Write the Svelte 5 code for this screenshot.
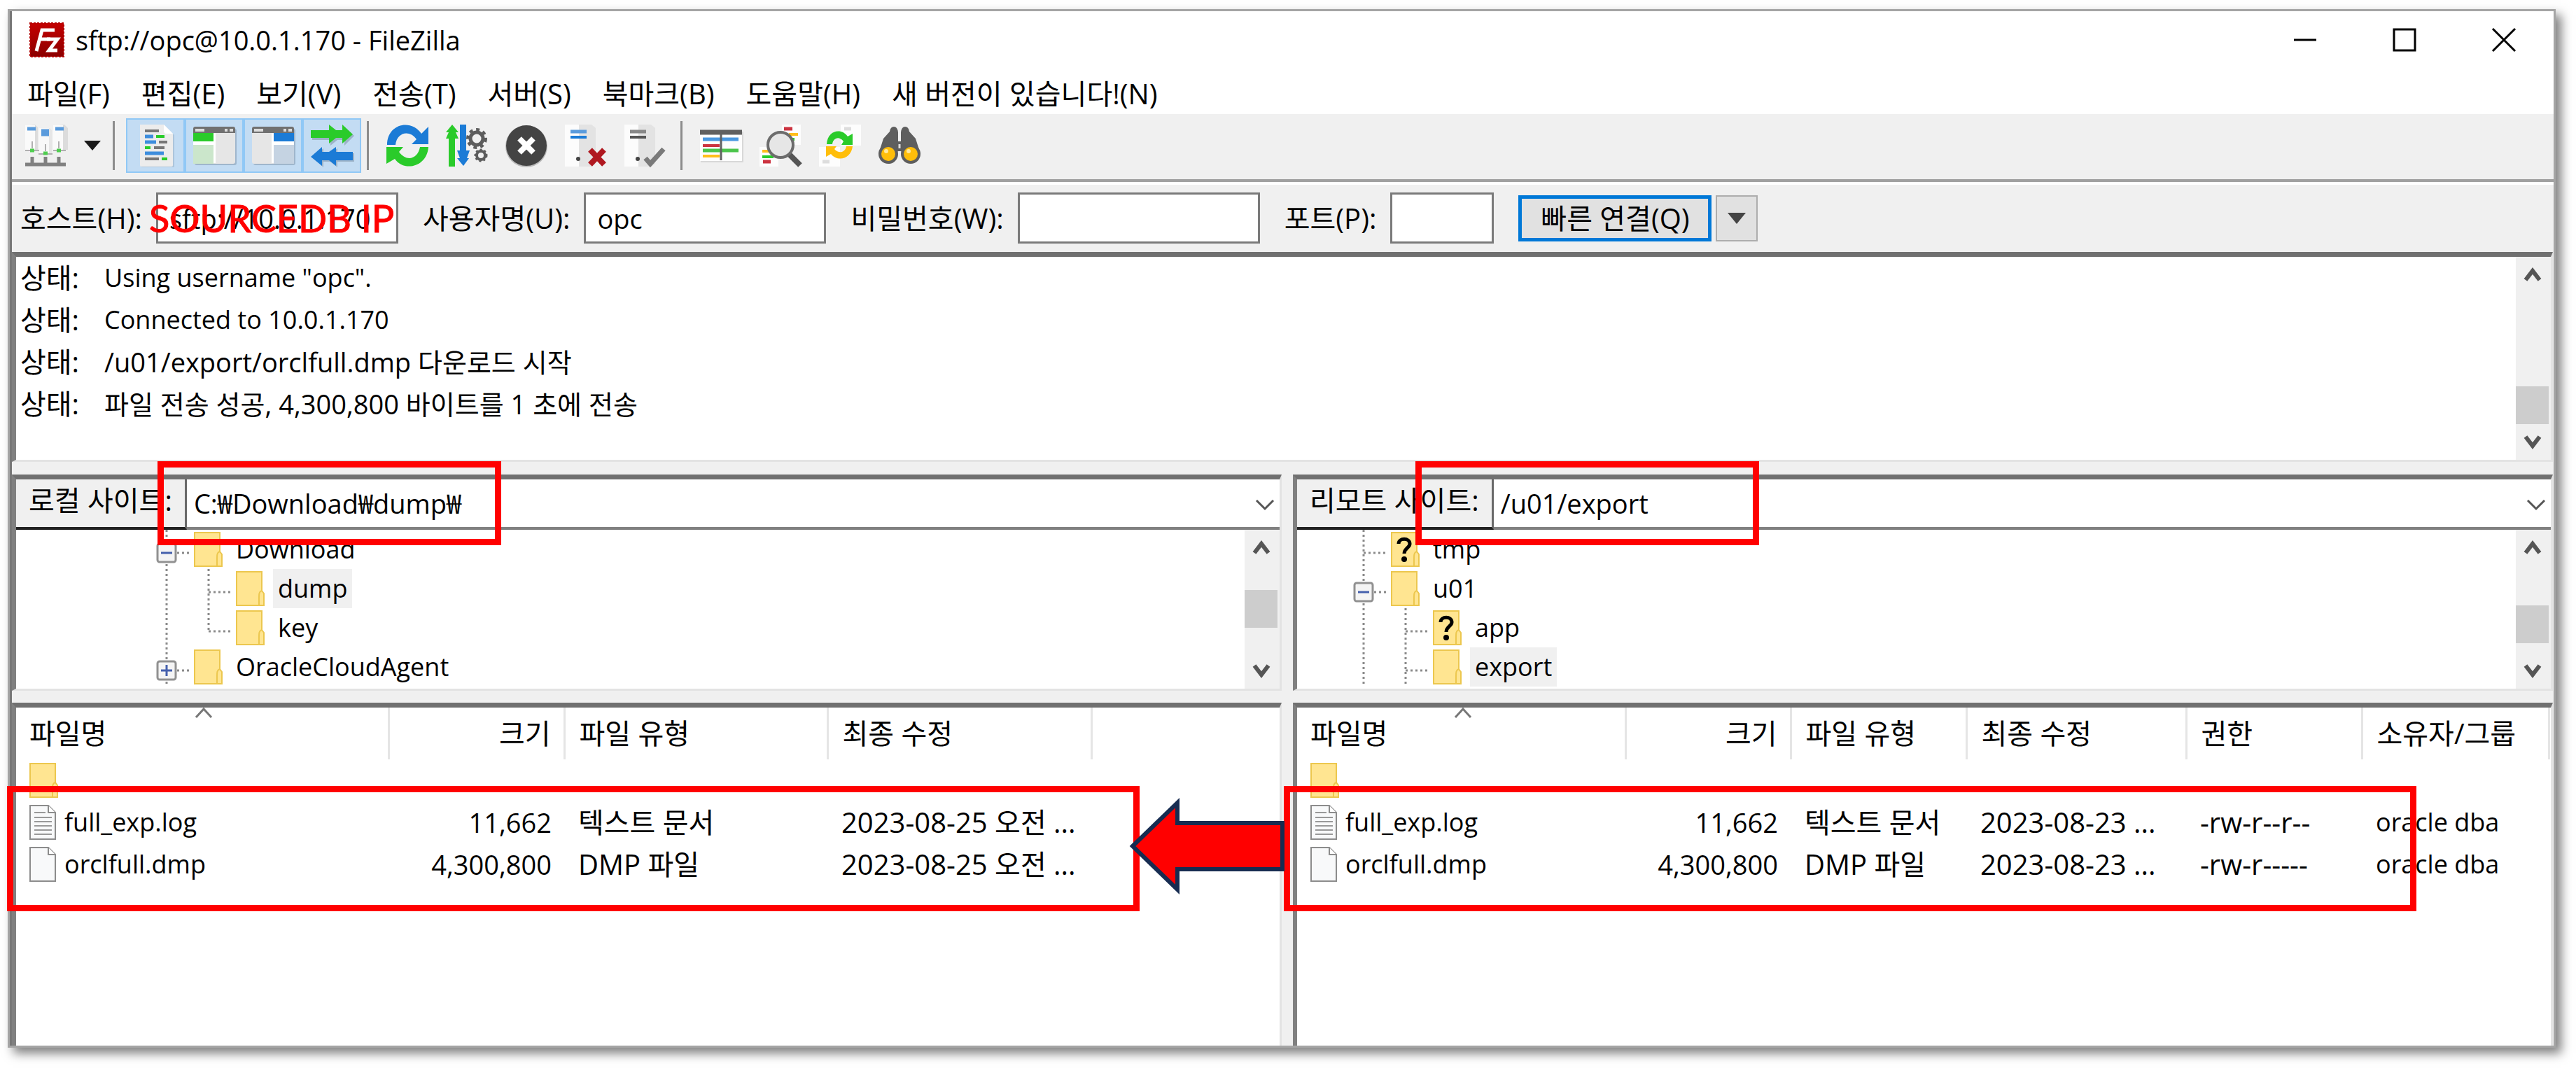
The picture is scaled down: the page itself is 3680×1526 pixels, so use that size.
<script>
  const menus = ['파일(F)', '편집(E)', '보기(V)', '전송(T)', '서버(S)', '북마크(B)', '도움말(H)', '새 버전이 있습니다!(N)'];

  const log = [
    { text: 'Using username "opc".', size: 'small' },
    { text: 'Connected to 10.0.1.170', size: 'small' },
    { text: '/u01/export/orclfull.dmp 다운로드 시작', size: 'medium' },
    { text: '파일 전송 성공, 4,300,800 바이트를 1 초에 전송', size: 'medium' }
  ];

  const localTree = [
    { name: 'Download', guides: ['minus'] },
    { name: 'dump', guides: ['line', 'tee'], selected: true },
    { name: 'key', guides: ['line', 'end'] },
    { name: 'OracleCloudAgent', guides: ['plus'] }
  ];

  const remoteTree = [
    { name: 'tmp', guides: ['tee'], unknown: true },
    { name: 'u01', guides: ['minus'] },
    { name: 'app', guides: ['line', 'tee'], unknown: true },
    { name: 'export', guides: ['line', 'tee'], selected: true }
  ];

  const localFiles = {
    columns: [
      { label: '파일명', key: 'name', width: 532 },
      { label: '크기', key: 'size', width: 251 },
      { label: '파일 유형', key: 'type', width: 376 },
      { label: '최종 수정', key: 'date', width: 377 }
    ],
    rows: [
      { icon: 'text', name: 'full_exp.log', size: '11,662', type: '텍스트 문서', date: '2023-08-25 오전 ...' },
      { icon: 'blank', name: 'orclfull.dmp', size: '4,300,800', type: 'DMP 파일', date: '2023-08-25 오전 ...' }
    ]
  };

  const remoteFiles = {
    columns: [
      { label: '파일명', key: 'name', width: 469 },
      { label: '크기', key: 'size', width: 236 },
      { label: '파일 유형', key: 'type', width: 251 },
      { label: '최종 수정', key: 'date', width: 314 },
      { label: '권한', key: 'perm', width: 251 },
      { label: '소유자/그룹', key: 'owner', width: 267 }
    ],
    rows: [
      { icon: 'text', name: 'full_exp.log', size: '11,662', type: '텍스트 문서', date: '2023-08-23 ...', perm: '-rw-r--r--', owner: 'oracle dba' },
      { icon: 'blank', name: 'orclfull.dmp', size: '4,300,800', type: 'DMP 파일', date: '2023-08-23 ...', perm: '-rw-r-----', owner: 'oracle dba' }
    ]
  };
</script>

{#snippet folder(unknown)}
  <svg class="folder" viewBox="0 0 41 50" aria-hidden="true">
    <path d="M1 1H37V28L40 32V49H1Z" fill="#ffe591" stroke="#ecc74e" stroke-width="2" />
    <path d="M37 28C33 29 33 33 33 38V48" fill="none" stroke="#ecc74e" stroke-width="2" />
    {#if unknown}
      <path d="M11 17C11 8 27 8 27 17C27 23 19 23 19 31" fill="none" stroke="#000" stroke-width="5" />
      <circle cx="19" cy="39" r="4" />
    {/if}
  </svg>
{/snippet}

{#snippet fileIcon(kind)}
  <svg class="folder" viewBox="0 0 41 50" aria-hidden="true">
    <path d="M1 1H27L37 11V49H1Z" fill="#f8f9fa" stroke="#8c8c8c" stroke-width="2" />
    <path d="M27 1V11H37" fill="#fff" stroke="#8c8c8c" stroke-width="2" />
    {#if kind === 'text'}
      <path d="M7 11H23M7 18H32M7 24H32M7 30H32M7 36H32M7 42H32" stroke="#999" stroke-width="2" />
    {/if}
  </svg>
{/snippet}

{#snippet guide(kind)}
  <svg class="guide" viewBox="0 0 60 56" aria-hidden="true">
    {#if kind === 'end'}
      <path class="dots" d="M30 0V33" />
    {:else}
      <path class="dots" d="M30 0V56" />
    {/if}
    {#if kind === 'tee' || kind === 'end'}
      <path class="dots" d="M30 33H65" />
    {/if}
    {#if kind === 'plus' || kind === 'minus'}
      <path class="dots" d="M45 33H64" />
      <rect x="17" y="20" width="26" height="26" rx="3" fill="#f4f4f4" stroke="#919191" stroke-width="3" />
      <path d={kind === 'plus' ? 'M22 33H38M30 25V41' : 'M22 33H38'} stroke="#4560ad" stroke-width="3" />
    {/if}
  </svg>
{/snippet}

{#snippet scrollbar(before, after)}
  <div class="scrollbar">
    <button class="arrow" aria-label="위로 스크롤">
      <svg viewBox="0 0 24 22"><path d="M2 19L12 6L22 19" fill="none" stroke="#555" stroke-width="6" /></svg>
    </button>
    <div style:flex-grow={before}></div>
    <div class="thumb"></div>
    <div style:flex-grow={after}></div>
    <button class="arrow" aria-label="아래로 스크롤">
      <svg viewBox="0 0 24 22"><path d="M2 3L12 16L22 3" fill="none" stroke="#555" stroke-width="6" /></svg>
    </button>
  </div>
{/snippet}

{#snippet sitePane(side, label, path, tree, before, after)}
  <section class="panel site {side}">
    <div class="site-bar">
      <label for="{side}-path">{label}</label>
      <div class="combo">
        <select id="{side}-path"><option>{path}</option></select>
        <svg viewBox="0 0 28 18" aria-hidden="true"><path d="M2 2L14 14L26 2" fill="none" stroke="#555" stroke-width="3" /></svg>
      </div>
    </div>
    <div class="tree-area">
      <ul class="tree">
        {#each tree as node}
          <li>
            {#each node.guides as kind}{@render guide(kind)}{/each}
            {@render folder(node.unknown)}
            <span class:selected={node.selected}>{node.name}</span>
          </li>
        {/each}
      </ul>
      {@render scrollbar(before, after)}
    </div>
    <div class="mark path-mark"></div>
  </section>
{/snippet}

{#snippet fileList(side, data)}
  <section class="panel list {side}">
    <table>
      <colgroup>
        {#each data.columns as col}<col style:width="{col.width}px" />{/each}
        <col />
      </colgroup>
      <thead>
        <tr>
          {#each data.columns as col, i}
            <th class={col.key} scope="col">
              {col.label}
              {#if i === 0}
                <svg class="sort" viewBox="0 0 26 16" aria-hidden="true"><path d="M2 14L13 2L24 14" fill="none" stroke="#777" stroke-width="3" /></svg>
              {/if}
            </th>
          {/each}
          <td></td>
        </tr>
      </thead>
      <tbody>
        <tr><td class="name"><div class="file">{@render folder(false)}</div></td></tr>
        {#each data.rows as row}
          <tr>
            {#each data.columns as col}
              <td class={col.key}>
                {#if col.key === 'name'}
                  <div class="file">{@render fileIcon(row.icon)}{row.name}</div>
                {:else}
                  {row[col.key]}
                {/if}
              </td>
            {/each}
          </tr>
        {/each}
      </tbody>
    </table>
    <div class="mark files-mark"></div>
    {#if side === 'local'}
      <svg class="transfer" viewBox="0 0 222 142" aria-hidden="true">
        <path d="M5 71L69 9V38H219V104H69V133Z" fill="#f00" stroke="#172c51" stroke-width="6" />
      </svg>
    {/if}
  </section>
{/snippet}

<main class="window">
  <header class="title-bar">
    <svg class="logo" viewBox="0 0 50 50" aria-hidden="true">
      <defs>
        <linearGradient id="fz" x1="0" y1="0" x2="0" y2="1"><stop offset="0" stop-color="#c40000" /><stop offset="1" stop-color="#8b0000" /></linearGradient>
      </defs>
      <rect x="1" y="1" width="48" height="48" fill="url(#fz)" stroke="#b40000" stroke-width="2" stroke-dasharray="3 2" />
      <path d="M10 41L18 11H36M15 24H30" fill="none" stroke="#fff" stroke-width="5" />
      <path d="M25 24H40L28 40H40" fill="none" stroke="#fff" stroke-width="5" />
    </svg>
    <h1>sftp://opc@10.0.1.170 - FileZilla</h1>
    <div class="window-buttons">
      <button aria-label="최소화"><svg viewBox="0 0 36 36"><path d="M2 18H34" stroke="#000" stroke-width="3" /></svg></button>
      <button aria-label="최대화"><svg viewBox="0 0 36 36"><rect x="3" y="3" width="30" height="30" fill="none" stroke="#000" stroke-width="3" /></svg></button>
      <button aria-label="닫기"><svg viewBox="0 0 36 36"><path d="M2 2L34 34M34 2L2 34" stroke="#000" stroke-width="3" /></svg></button>
    </div>
  </header>

  <nav class="menu-bar">
    {#each menus as item}<button>{item}</button>{/each}
  </nav>

  <div class="toolbar">
    <button class="sites" aria-label="사이트 관리자">
      <svg viewBox="0 0 60 60">
        <path d="M0 2L14 0L18 4V36H0Z M40 2L56 0L61 5V36H40Z" fill="#dcdcdc" />
        <path d="M0 1H14V36H0Z M40 1H54V36H40Z" fill="#fafafa" />
        <path d="M20 5H35L38 8V41H20Z" fill="#e6e6e6" /><path d="M20 5H34V41H20Z" fill="#f8f8f8" />
        <path d="M3 6H15M43 6H55M23 9H34M23 14H34" stroke="#5a9bdc" stroke-width="5" />
        <path d="M10 24V34M29 28V38M48 24V34M0 37H20M19 42H39M40 37H58" stroke="#b0b0b0" stroke-width="2" />
        <path d="M7 37H13M26 41H32M45 37H51" stroke="#4fce4f" stroke-width="5" />
        <path d="M0 57H58M10 46V56M29 46V56M48 46V56" stroke="#808080" stroke-width="5" />
      </svg>
    </button>
    <button class="sites-menu" aria-label="사이트 목록">
      <svg viewBox="0 0 24 14"><path d="M0 0H24L12 14Z" fill="#1a1a1a" /></svg>
    </button>
    <i class="sep"></i>
    <div class="toggles">
      <button aria-label="메시지 로그" aria-pressed="true">
        <svg viewBox="0 0 60 60">
          <path d="M10 3H44L57 15V61H10Z" fill="#9fb6cc" opacity=".6" />
          <path d="M8 0H42L55 13V58Q55 60 53 60H10Q8 60 8 58Z" fill="#ececec" />
          <path d="M42 0L55 13H46Q42 13 42 9Z" fill="#fff" />
          <path d="M15 9H35M35 25H47M28 33H43M15 49H35" stroke="#777" stroke-width="4" />
          <path d="M15 17H27M15 25H31M15 41H42" stroke="#3d8ddd" stroke-width="5" />
          <path d="M31 17H43M15 33H23M39 49H47" stroke="#29cc29" stroke-width="4" />
        </svg>
      </button>
      <button aria-label="로컬 디렉터리 트리" aria-pressed="true">
        <svg viewBox="0 0 60 60">
          <rect x="2" y="6" width="60" height="52" rx="3" fill="#9fb6cc" />
          <rect y="3" width="60" height="53" rx="3" fill="#e6e6e6" />
          <path d="M0 12V6Q0 3 3 3H57Q60 3 60 6V12Z" fill="#707070" />
          <path d="M3 8H16M45 8H49M52 8H57" stroke="#ddd" stroke-width="4" />
          <rect y="12" width="29" height="12" fill="#2acb2a" />
          <rect y="24" width="29" height="5" fill="#fff" /><rect x="29" y="12" width="3" height="43" fill="#fff" />
          <rect y="29" width="29" height="27" fill="#cbe6cb" />
        </svg>
      </button>
      <button aria-label="원격 디렉터리 트리" aria-pressed="true">
        <svg viewBox="0 0 60 60">
          <rect x="2" y="6" width="60" height="52" rx="3" fill="#9fb6cc" />
          <rect y="3" width="60" height="53" rx="3" fill="#e6e6e6" />
          <path d="M0 12V6Q0 3 3 3H57Q60 3 60 6V12Z" fill="#707070" />
          <path d="M3 8H16M45 8H49M52 8H57" stroke="#ddd" stroke-width="4" />
          <rect x="31" y="12" width="29" height="12" fill="#1b7bd6" />
          <rect x="31" y="24" width="29" height="5" fill="#fff" /><rect x="28" y="12" width="3" height="43" fill="#fff" />
          <rect x="31" y="29" width="29" height="27" fill="#c5d3e2" />
        </svg>
      </button>
      <button aria-label="전송 대기열" aria-pressed="true">
        <svg viewBox="0 0 60 60">
          <path d="M2 11H28V3L38 11H48V3L62 16L48 30V22H38L28 30V22H2Z M62 41H38V34L28 41H18V34L3 47L18 61V53H28L38 61V53H62Z" fill="#9db3c8" />
          <path d="M0 8H26V0L36 8H45V0L60 14L45 27V19H36L26 27V19H0Z" fill="#2acb2a" />
          <path d="M60 39H36V32L26 39H16V32L0 46L16 59V51H26L36 59V51H60Z" fill="#1b7bd6" />
        </svg>
      </button>
    </div>
    <i class="sep"></i>
    <div class="tools">
      <button aria-label="새로 고침">
        <svg viewBox="0 0 60 60">
          <path d="M1 29C1 -1 35 -9 50 13L60 3V28H36L43 21C33 7 15 11 13 29Z" fill="#1b7bd6" />
          <path d="M60 32C58 61 25 68 12 49L0 56V32H24L18 39C29 54 45 49 48 32Z" fill="#2acb2a" />
        </svg>
      </button>
      <button aria-label="대기열 처리">
        <svg viewBox="0 0 60 60">
          <path d="M9 0L18 11H14L18 20H13V60H4V20H0L4 11H0Z" fill="#2acb2a" />
          <path d="M20 0H29V37H34L30 48H33L25 59L16 48H20L16 37H20Z" fill="#1b7bd6" />
          <circle cx="44" cy="20" r="9" fill="none" stroke="#5c5c5c" stroke-width="5" />
          <circle cx="44" cy="20" r="13" fill="none" stroke="#5c5c5c" stroke-width="4" stroke-dasharray="5 5" />
          <circle cx="50" cy="44" r="6" fill="none" stroke="#5c5c5c" stroke-width="4" />
          <circle cx="50" cy="44" r="8" fill="none" stroke="#5c5c5c" stroke-width="3" stroke-dasharray="3 3" />
        </svg>
      </button>
      <button aria-label="취소">
        <svg viewBox="0 0 60 60">
          <circle cx="30" cy="31" r="30" fill="#bbb" /><circle cx="30" cy="30" r="29" fill="#444" />
          <path d="M20 20L40 40M40 20L20 40" stroke="#fff" stroke-width="8" />
        </svg>
      </button>
      <button aria-label="연결 끊기">
        <svg viewBox="0 0 60 60">
          <path d="M18 0H38L44 5V56L38 60H18Z" fill="#e3e3e3" /><rect y="0" width="20" height="60" fill="#fcfcfc" />
          <path d="M8 10H31" stroke="#5a9bdc" stroke-width="5" /><path d="M8 18H31" stroke="#1b7bd6" stroke-width="4" />
          <circle cx="19" cy="49" r="3" fill="#444" />
          <path d="M36 36L56 57M56 36L36 57" stroke="#b01820" stroke-width="8" />
        </svg>
      </button>
      <button aria-label="다시 연결">
        <svg viewBox="0 0 60 60">
          <path d="M18 0H38L44 5V56L38 60H18Z" fill="#e3e3e3" /><rect y="0" width="20" height="60" fill="#fcfcfc" />
          <path d="M8 10H31" stroke="#888" stroke-width="5" /><path d="M8 18H31" stroke="#555" stroke-width="4" />
          <circle cx="19" cy="49" r="3" fill="#444" />
          <path d="M30 48L37 56L56 35" fill="none" stroke="#7a7a7a" stroke-width="7" />
        </svg>
      </button>
    </div>
    <i class="sep"></i>
    <div class="tools">
      <button aria-label="디렉터리 비교">
        <svg viewBox="0 0 60 60">
          <rect x="1" y="10" width="61" height="44" fill="#d8d8d8" /><rect x="0" y="10" width="60" height="42" fill="#fdfdfd" />
          <path d="M0 11H60" stroke="#606060" stroke-width="7" />
          <path d="M4 21H55" stroke="#4a98e0" stroke-width="5" /><path d="M4 30H28" stroke="#cc3340" stroke-width="4" />
          <path d="M4 37H55" stroke="#4bc44b" stroke-width="5" /><path d="M4 45H28" stroke="#ffbe1a" stroke-width="4" />
          <path d="M30 12V51" stroke="#606060" stroke-width="3" />
        </svg>
      </button>
      <button aria-label="파일 필터">
        <svg viewBox="0 0 60 60">
          <rect x="32" y="0" width="27" height="29" fill="#fdfdfd" /><rect y="32" width="27" height="28" fill="#fdfdfd" />
          <path d="M35 6H47M5 53H16" stroke="#cc3340" stroke-width="5" />
          <path d="M42 14H55M4 38H14" stroke="#ffbe1a" stroke-width="4" />
          <path d="M44 21H50M4 46H20" stroke="#2acb2a" stroke-width="4" />
          <path d="M43 43L58 58" stroke="#555" stroke-width="8" />
          <circle cx="30" cy="29" r="18" fill="#e6e6e6" stroke="#6c6c6c" stroke-width="4" />
        </svg>
      </button>
      <button aria-label="동기화 탐색">
        <svg viewBox="0 0 60 60">
          <rect x="31" y="0" width="29" height="30" fill="#fdfdfd" /><rect y="32" width="30" height="28" fill="#fdfdfd" />
          <path d="M36 6H46M5 53H15" stroke="#ddd" stroke-width="5" />
          <path d="M11 28C12 8 32 4 41 17L48 13V29H32L35 24C28 15 20 20 19 28Z" fill="#2acb2a" />
          <path d="M48 31C46 49 27 54 17 42L10 46V31H25L22 35C29 43 38 39 39 31Z" fill="#ffbe0a" />
        </svg>
      </button>
      <button aria-label="파일 검색">
        <svg viewBox="0 0 60 60">
          <path d="M16 10Q17 3 22 3Q27 3 28 11V24H32V11Q33 3 38 3Q43 3 44 10L53 20L60 42L31 38H29L0 42L7 20Z" fill="#5e5e5e" />
          <path d="M30 28V34" stroke="#ddd" stroke-width="3" />
          <circle cx="14" cy="42" r="12" fill="#ffbe0a" stroke="#5e5e5e" stroke-width="4" />
          <circle cx="46" cy="42" r="12" fill="#ffbe0a" stroke="#5e5e5e" stroke-width="4" />
          <circle cx="11" cy="38" r="3" fill="#ffe9a0" /><circle cx="43" cy="38" r="3" fill="#ffe9a0" />
        </svg>
      </button>
    </div>
  </div>

  <form class="quick-connect" onsubmit={(event) => event.preventDefault()}>
    <label for="host">호스트(H):</label>
    <div class="host">
      <input id="host" value="sftp://10.0.1.170" />
      <span class="note">SOURCEDB IP</span>
    </div>
    <label for="user">사용자명(U):</label>
    <input id="user" value="opc" />
    <label for="pass">비밀번호(W):</label>
    <input id="pass" type="password" />
    <label for="port">포트(P):</label>
    <input id="port" class="port" />
    <button class="connect">빠른 연결(Q)</button>
    <button class="history" type="button" aria-label="최근 연결">
      <svg viewBox="0 0 26 16"><path d="M0 0H26L13 16Z" fill="#444" /></svg>
    </button>
  </form>

  <section class="panel log">
    <ul>
      {#each log as line}<li><b>상태:</b><span class={line.size}>{line.text}</span></li>{/each}
    </ul>
    {@render scrollbar(135, 1)}
  </section>

  <div class="panes">
    {@render sitePane('local', '로컬 사이트:', 'C:₩Download₩dump₩', localTree, 36, 37)}
    {@render sitePane('remote', '리모트 사이트:', '/u01/export', remoteTree, 58, 15)}
    {@render fileList('local', localFiles)}
    {@render fileList('remote', remoteFiles)}
  </div>
</main>

<style>
  :global(body) {
    margin: 0;
    background: #fff;
  }

  .window {
    --red: 9px solid #f00;
    box-sizing: border-box;
    display: flex;
    flex-direction: column;
    min-height: calc(100vh - 42px);
    margin: 13px 29px 29px 11px;
    border: 3px solid #a5a5a5;
    background: #f0f0f0;
    box-shadow: inset 3px 0 #777, 8px 8px 14px rgba(0, 0, 0, 0.5);
    padding-left: 3px;
    color: #000;
    font: 40px/60px 'Open Sans', 'Noto Sans CJK KR', sans-serif;
  }

  button,
  input,
  select {
    margin: 0;
    padding: 0;
    border: 0;
    border-radius: 0;
    background: none;
    color: inherit;
    font: inherit;
  }

  svg {
    display: block;
    overflow: visible;
  }

  ul {
    margin: 0;
    padding: 0;
    list-style: none;
  }

  .title-bar {
    display: flex;
    align-items: center;
    height: 82px;
    padding-left: 25px;
    background: #fff;
  }

  .logo {
    width: 50px;
    height: 50px;
    margin-right: 16px;
  }

  h1 {
    flex: 1;
    margin: 0;
    font-size: 38px;
    font-weight: 400;
  }

  .window-buttons {
    display: flex;
  }

  .window-buttons button {
    display: grid;
    place-items: center;
    width: 142px;
    height: 80px;
  }

  .window-buttons svg {
    width: 36px;
    height: 36px;
  }

  .menu-bar {
    display: flex;
    gap: 45px;
    height: 58px;
    padding: 7px 22px 0;
    background: #fff;
  }

  .menu-bar button {
    height: 58px;
    line-height: 58px;
    white-space: nowrap;
  }

  .toolbar {
    display: flex;
    align-items: center;
    height: 78px;
    padding: 6px 0 9px 19px;
    border-bottom: 4px solid #a0a0a0;
    box-shadow: 0 4px #fff;
  }

  .toolbar svg {
    width: 60px;
    height: 60px;
  }

  .toolbar .sites-menu {
    padding: 0 17px 0 24px;
  }

  .toolbar .sites-menu svg {
    width: 24px;
    height: 14px;
  }

  .sep {
    width: 3px;
    height: 70px;
    background: #8c8c8c;
  }

  .toggles,
  .tools {
    display: flex;
  }

  .toggles {
    margin: 0 8px 0 16px;
  }

  .toggles button,
  .tools button {
    display: grid;
    place-items: center;
    box-sizing: border-box;
    width: 85px;
    height: 78px;
  }

  .toggles button {
    width: 84px;
    border: 2px solid #90c8f6;
    background: #c3dcf3;
  }

  .tools {
    margin: 0 8px 0 12px;
  }

  .quick-connect {
    display: flex;
    align-items: center;
    height: 73px;
    padding: 15px 12px 12px;
  }

  .quick-connect label {
    padding-right: 20px;
    white-space: nowrap;
  }

  .quick-connect input {
    box-sizing: border-box;
    width: 346px;
    height: 73px;
    margin-right: 35px;
    padding: 0 16px;
    border: 3px solid #7a7a7a;
    background: #fff;
    font-size: 38px;
  }

  .quick-connect .port {
    width: 148px;
  }

  .host {
    position: relative;
  }

  .note {
    position: absolute;
    top: 0;
    left: -10px;
    color: #f00;
    font: 54px/73px Lato, sans-serif;
    white-space: nowrap;
    -webkit-text-stroke: 1px #f00;
  }

  .connect,
  .history {
    box-sizing: border-box;
    height: 66px;
    border: 5px solid #0078d7;
    background: #e1e1e1;
  }

  .connect {
    width: 276px;
    line-height: 56px;
    white-space: nowrap;
  }

  .history {
    display: grid;
    place-items: center;
    width: 60px;
    margin-left: 6px;
    border: 2px solid #adadad;
  }

  .history svg {
    width: 26px;
    height: 16px;
  }

  .panel {
    position: relative;
    border: 3px solid #e3e3e3;
    border-width: 7px 3px 3px 6px;
    border-top-color: #707070;
    border-left-color: #808080;
    background: #fff;
  }

  .log {
    display: flex;
    height: 290px;
    margin: 0 1px 18px 0;
  }

  .log ul {
    flex: 1;
    padding-left: 6px;
  }

  .log li {
    display: flex;
  }

  .log b {
    width: 120px;
    font-weight: 400;
  }

  .small {
    font-size: 36px;
  }

  .medium {
    font-size: 38px;
  }

  .scrollbar {
    display: flex;
    flex-direction: column;
    width: 47px;
    padding-right: 3px;
    background: #f0f0f0;
  }

  .arrow {
    display: grid;
    place-items: center;
    flex: none;
    height: 50px;
  }

  .arrow svg {
    width: 24px;
    height: 22px;
  }

  .thumb {
    height: 54px;
    background: #cdcdcd;
  }

  .panes {
    flex: 1;
    display: grid;
    grid-template-columns: 1814fr 1800fr;
    grid-template-rows: auto 1fr;
    gap: 17px 16px;
    margin-right: 1px;
  }

  .site,
  .list {
    min-width: 0;
  }

  .site-bar {
    display: flex;
    height: 68px;
    border-bottom: 4px solid #808080;
    background: #f0f0f0;
  }

  .site-bar label {
    height: 68px;
    padding: 0 18px;
    border-right: 3px solid #696969;
    border-bottom: 4px solid #222;
    white-space: nowrap;
  }

  .combo {
    position: relative;
    flex: 1;
    background: #fff;
  }

  .combo select {
    width: 100%;
    height: 68px;
    padding-left: 10px;
    appearance: none;
    font-size: 38px;
  }

  .combo svg {
    position: absolute;
    top: 28px;
    right: 7px;
    width: 28px;
    height: 18px;
  }

  .tree-area {
    display: flex;
    height: 227px;
    overflow: hidden;
  }

  .tree {
    flex: 1;
    font-size: 36px;
  }

  .local .tree {
    padding-left: 185px;
  }

  .remote .tree {
    padding-left: 65px;
  }

  .tree li {
    display: flex;
    align-items: center;
    height: 56px;
  }

  .tree span {
    margin-left: 12px;
    padding: 0 7px;
    line-height: 56px;
  }

  .tree .selected {
    background: #f0f0f0;
  }

  .guide {
    width: 60px;
    height: 56px;
  }

  .guide + :global(.folder) {
    margin-left: 9px;
  }

  .dots {
    fill: none;
    stroke: #8a8a8a;
    stroke-width: 3;
    stroke-dasharray: 3 4;
  }

  .folder {
    flex: none;
    width: 41px;
    height: 50px;
  }

  .list {
    border-bottom: 0;
  }

  table {
    width: 100%;
    border-collapse: collapse;
    table-layout: fixed;
  }

  th,
  td {
    box-sizing: border-box;
    height: 60px;
    padding: 0 0 0 20px;
    font-weight: 400;
    text-align: left;
    white-space: nowrap;
  }

  th {
    position: relative;
    height: 74px;
    border-right: 3px solid #e5e5e5;
  }

  .sort {
    position: absolute;
    top: 0;
    left: 50%;
    width: 26px;
    height: 16px;
    margin-left: -10px;
  }

  .name {
    padding-left: 19px;
  }

  .size {
    padding-right: 18px;
    text-align: right;
  }

  td.name,
  td.owner {
    font-size: 36px;
  }

  td.size {
    font-size: 38px;
  }

  .file {
    display: flex;
    align-items: center;
    gap: 9px;
    height: 60px;
  }

  .mark {
    position: absolute;
    box-sizing: border-box;
    z-index: 1;
    border: var(--red);
  }

  .path-mark {
    top: -26px;
    left: 202px;
    width: 491px;
    height: 120px;
  }

  .remote .path-mark {
    left: 169px;
  }

  .files-mark {
    top: 112px;
    left: -13px;
    width: 1618px;
    height: 179px;
  }

  .remote .files-mark {
    left: -19px;
  }

  .transfer {
    position: absolute;
    z-index: 2;
    top: 127px;
    left: 1590px;
    width: 222px;
    height: 142px;
  }
</style>
